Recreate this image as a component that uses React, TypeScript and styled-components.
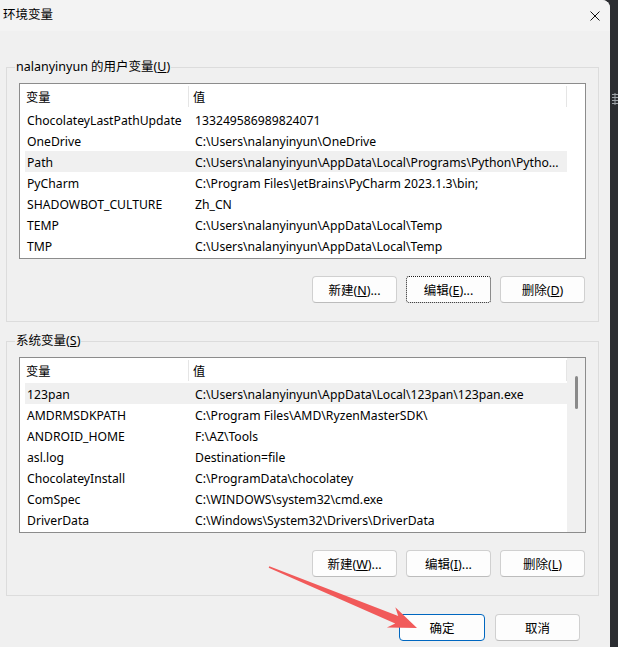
import React from "react";
import styled, { createGlobalStyle } from "styled-components";

const GlobalStyle = createGlobalStyle`
  html, body { margin: 0; padding: 0; }
  body {
    background: #2b2d31;
    font-family: "Noto Sans", "Noto Sans CJK SC", sans-serif;
    font-size: 12.2px;
    color: #000;
  }
  #root { width: 618px; height: 647px; overflow: hidden; }
  * { box-sizing: border-box; }
`;

const Screen = styled.div`
  position: relative;
  display: flex;
  width: 618px;
  height: 647px;
  overflow: hidden;
`;

const Window = styled.div`
  width: 610px;
  height: 100%;
  flex-shrink: 0;
  background: #f0f0f0;
  border-top-right-radius: 8px;
  display: flex;
  flex-direction: column;
`;

const Desktop = styled.div`
  flex: 1;
  padding: 92px 0 0 2px;
  overflow: hidden;
`;

const TitleBar = styled.div`
  height: 31px;
  background: #f3f3f3;
  border-top-right-radius: 8px;
  display: flex;
  align-items: center;
  justify-content: space-between;
  padding: 0 10px 0 3px;
`;

const Title = styled.span`
  font-size: 12.5px;
  line-height: 1;
`;

const Body = styled.div`
  display: flex;
  flex-direction: column;
  gap: 10px;
  padding: 27px 11px 0 6px;
`;

const Group = styled.fieldset`
  margin: 0;
  min-width: 0;
  border: 1px solid #dcdcdc;
  padding: 7px 12px 18px 12px;
  display: flex;
  flex-direction: column;
  gap: 17px;
`;

const Legend = styled.legend`
  font-size: 12.5px;
  line-height: 18px;
  padding: 0 1px;
  margin-left: -4px;
`;

const ListBox = styled.div`
  height: 176px;
  border: 1px solid #8c8c8c;
  background: #fff;
  display: flex;
`;

const ListMain = styled.div`
  width: 547px;
  display: flex;
  flex-direction: column;
`;

const HeaderRow = styled.div`
  height: 25px;
  padding: 2px 0;
  display: flex;
`;

const HeaderCell = styled.div<{ $width?: number; $pad: number }>`
  ${(p) => (p.$width ? `width: ${p.$width}px;` : "flex: 1;")}
  padding-left: ${(p) => p.$pad}px;
  padding-top: 1px;
  border-right: 1px solid #e5e5e5;
  display: flex;
  align-items: center;
`;

const Row = styled.div<{ $selected?: boolean }>`
  height: 21px;
  width: 542px;
  margin-left: 5px;
  padding-top: 1px;
  display: flex;
  align-items: center;
  background: ${(p) => (p.$selected ? "#f0f0f0" : "transparent")};
  white-space: nowrap;
`;

const NameCell = styled.div`
  width: 170px;
  padding-left: 2px;
  overflow: hidden;
`;

const ValueCell = styled.div`
  flex: 1;
  overflow: hidden;
`;

const Side = styled.div<{ $scroll?: boolean }>`
  flex: 1;
  background: ${(p) => (p.$scroll ? "#f0f0f0" : "#fff")};
  padding: 18px 0 0 8px;
`;

const Thumb = styled.div`
  width: 3px;
  height: 33px;
  border-radius: 2px;
  background: #8a8a8a;
`;

const ButtonRow = styled.div`
  display: flex;
  justify-content: flex-end;
  gap: 9px;
  padding-right: 1px;
`;

const Button = styled.button<{ $variant?: "focus" | "primary"; $width?: number }>`
  width: ${(p) => p.$width ?? 85}px;
  height: 27px;
  padding: 0;
  background: #fdfdfd;
  border: 1px solid #d0d0d0;
  border-bottom-color: #bcbcbc;
  border-radius: 4px;
  font-family: inherit;
  font-size: 12.5px;
  color: #000;
  ${(p) =>
    p.$variant === "focus" &&
    `border: 1px dotted #1a1a1a; border-radius: 3px;`}
  ${(p) =>
    p.$variant === "primary" &&
    `border: 1px solid #0067c0; border-radius: 4px;`}
`;

const Footer = styled.div`
  display: flex;
  justify-content: flex-end;
  gap: 10px;
  margin-top: 8px;
  padding-right: 19px;
`;

const Overlay = styled.svg`
  position: absolute;
  left: 0;
  top: 0;
  pointer-events: none;
`;

type Item = { name: string; value: string; selected?: boolean };

const userVars: Item[] = [
  { name: "ChocolateyLastPathUpdate", value: "133249586989824071" },
  { name: "OneDrive", value: "C:\\Users\\nalanyinyun\\OneDrive" },
  {
    name: "Path",
    value: "C:\\Users\\nalanyinyun\\AppData\\Local\\Programs\\Python\\Pytho...",
    selected: true,
  },
  { name: "PyCharm", value: "C:\\Program Files\\JetBrains\\PyCharm 2023.1.3\\bin;" },
  { name: "SHADOWBOT_CULTURE", value: "Zh_CN" },
  { name: "TEMP", value: "C:\\Users\\nalanyinyun\\AppData\\Local\\Temp" },
  { name: "TMP", value: "C:\\Users\\nalanyinyun\\AppData\\Local\\Temp" },
];

const sysVars: Item[] = [
  {
    name: "123pan",
    value: "C:\\Users\\nalanyinyun\\AppData\\Local\\123pan\\123pan.exe",
    selected: true,
  },
  { name: "AMDRMSDKPATH", value: "C:\\Program Files\\AMD\\RyzenMasterSDK\\" },
  { name: "ANDROID_HOME", value: "F:\\AZ\\Tools" },
  { name: "asl.log", value: "Destination=file" },
  { name: "ChocolateyInstall", value: "C:\\ProgramData\\chocolatey" },
  { name: "ComSpec", value: "C:\\WINDOWS\\system32\\cmd.exe" },
  { name: "DriverData", value: "C:\\Windows\\System32\\Drivers\\DriverData" },
];

const VarList: React.FC<{ items: Item[]; scroll?: boolean }> = ({ items, scroll }) => (
  <ListBox>
    <ListMain>
      <HeaderRow>
        <HeaderCell $width={169} $pad={6}>变量</HeaderCell>
        <HeaderCell $pad={4}>值</HeaderCell>
      </HeaderRow>
      {items.map((it) => (
        <Row key={it.name} $selected={it.selected}>
          <NameCell>{it.name}</NameCell>
          <ValueCell>{it.value}</ValueCell>
        </Row>
      ))}
    </ListMain>
    <Side $scroll={scroll}>{scroll && <Thumb />}</Side>
  </ListBox>
);

const CloseIcon = () => (
  <svg width="10" height="10" viewBox="0 0 10 10">
    <path d="M0.5 0.5 L9.5 9.5 M9.5 0.5 L0.5 9.5" stroke="#111" strokeWidth="1" fill="none" />
  </svg>
);

const DesktopMark = () => (
  <svg width="6" height="12" viewBox="0 0 6 12">
    <path d="M0 1.5 H6 M0 4.5 H6 M0 7.5 H6 M0 10.5 H6 M3 0 V12" stroke="#9ea3a8" strokeWidth="1" fill="none" />
  </svg>
);

export default function App() {
  return (
    <>
      <GlobalStyle />
      <Screen>
        <Window>
          <TitleBar>
            <Title>环境变量</Title>
            <CloseIcon />
          </TitleBar>
          <Body>
            <Group>
              <Legend>
                nalanyinyun 的用户变量(<u>U</u>)
              </Legend>
              <VarList items={userVars} />
              <ButtonRow>
                <Button>
                  新建(<u>N</u>)...
                </Button>
                <Button $variant="focus">
                  编辑(<u>E</u>)...
                </Button>
                <Button>
                  删除(<u>D</u>)
                </Button>
              </ButtonRow>
            </Group>
            <Group>
              <Legend>
                系统变量(<u>S</u>)
              </Legend>
              <VarList items={sysVars} scroll />
              <ButtonRow>
                <Button>
                  新建(<u>W</u>)...
                </Button>
                <Button>
                  编辑(<u>I</u>)...
                </Button>
                <Button>
                  删除(<u>L</u>)
                </Button>
              </ButtonRow>
            </Group>
            <Footer>
              <Button $variant="primary" $width={86}>
                确定
              </Button>
              <Button>取消</Button>
            </Footer>
          </Body>
        </Window>
        <Desktop>
          <DesktopMark />
        </Desktop>
        <Overlay width="618" height="647" viewBox="0 0 618 647">
          <polygon
            points="269.3,566.3 398.2,616.0 395.3,607.2 417,628 386.9,627.6 395.2,623.4 268.7,567.7"
            fill="#f15a5a"
          />
        </Overlay>
      </Screen>
    </>
  );
}
